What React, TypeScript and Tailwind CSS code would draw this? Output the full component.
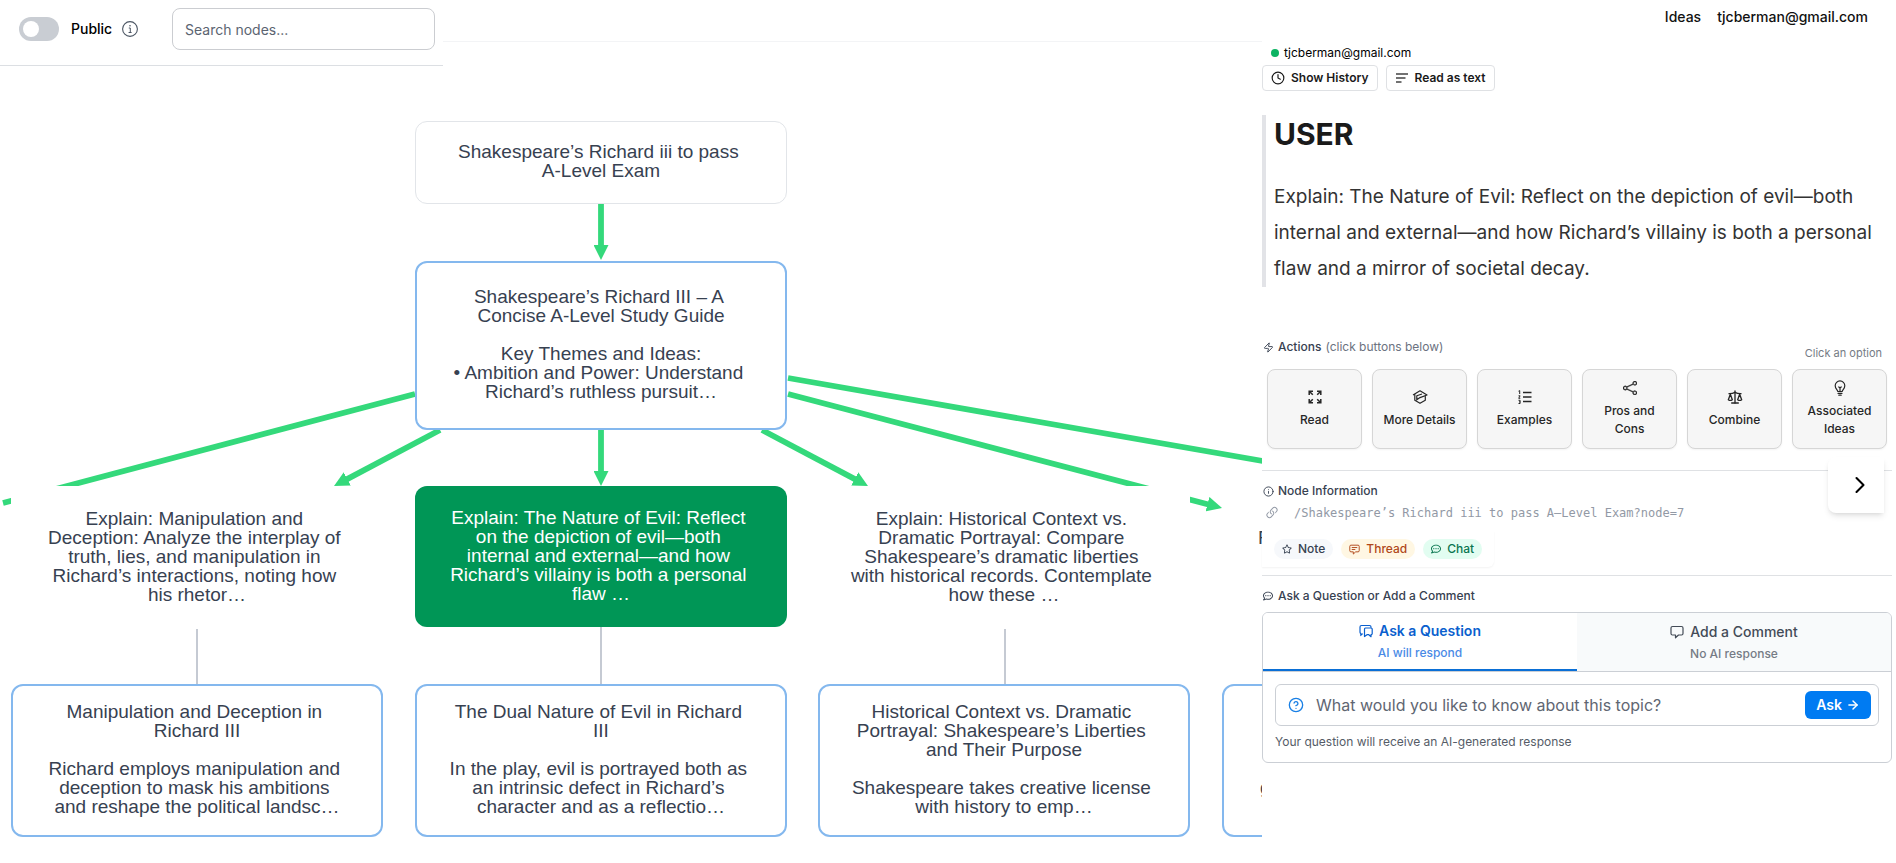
import { useState } from "react";
import type { ReactNode } from "react";
import clsx from "clsx";
import { BsLink45Deg, BsShare } from "react-icons/bs";
import { FaRegCommentDots, FaRegStar } from "react-icons/fa";
import { ArrowRight, ChevronRight, CircleQuestionMark, Clock, Info, Scale, Zap } from "lucide-react";

type GraphNode = {
  id: string;
  left: number;
  top: number;
  height: number;
  variant: "root" | "outline" | "plain" | "selected";
  align?: string;
  text: string;
};

// Wrapped lines keep their trailing space so they centre like the canvas labels
const nodes: GraphNode[] = [
  {
    id: "1",
    left: 415,
    top: 78,
    height: 83,
    variant: "root",
    text: "Shakespeare’s Richard iii to pass \nA-Level Exam",
  },
  {
    id: "2",
    left: 415,
    top: 218,
    height: 169,
    variant: "outline",
    text: "Shakespeare’s Richard III – A \nConcise A-Level Study Guide\n\nKey Themes and Ideas:\n• Ambition and Power: Understand \nRichard’s ruthless pursuit…",
  },
  {
    id: "5",
    left: 11,
    top: 443,
    height: 143,
    variant: "plain",
    text: "Explain: Manipulation and \nDeception: Analyze the interplay of \ntruth, lies, and manipulation in \nRichard’s interactions, noting how \nhis rhetor…",
  },
  {
    id: "7",
    left: 415,
    top: 443,
    height: 141,
    variant: "selected",
    text: "Explain: The Nature of Evil: Reflect \non the depiction of evil—both \ninternal and external—and how \nRichard’s villainy is both a personal \nflaw …",
  },
  {
    id: "9",
    left: 818,
    top: 443,
    height: 143,
    variant: "plain",
    text: "Explain: Historical Context vs. \nDramatic Portrayal: Compare \nShakespeare’s dramatic liberties \nwith historical records. Contemplate \nhow these …",
  },
  { id: "11", left: 1222, top: 443, height: 143, variant: "plain", align: "justify-start pl-9", text: "\nF\n\n\n " },
  {
    id: "6",
    left: 11,
    top: 641,
    height: 153,
    variant: "outline",
    text: "Manipulation and Deception in \nRichard III\n\nRichard employs manipulation and \ndeception to mask his ambitions \nand reshape the political landsc…",
  },
  {
    id: "8",
    left: 415,
    top: 641,
    height: 153,
    variant: "outline",
    text: "The Dual Nature of Evil in Richard \nIII\n\nIn the play, evil is portrayed both as \nan intrinsic defect in Richard’s \ncharacter and as a reflectio…",
  },
  {
    id: "10",
    left: 818,
    top: 641,
    height: 153,
    variant: "outline",
    text: "Historical Context vs. Dramatic \nPortrayal: Shakespeare’s Liberties \nand Their Purpose\n\nShakespeare takes creative license \nwith history to emp…",
  },
  { id: "12", left: 1222, top: 641, height: 153, variant: "outline", align: "justify-start pl-9", text: "\n\n\n\ng\n " },
];

const arrows = [
  { from: [601, 161], to: [601, 217] },
  { from: [601, 387], to: [601, 443] },
  { from: [440, 387], to: [334, 443] },
  { from: [762, 387], to: [868, 443] },
  { from: [788, 351], to: [1222, 465] },
];

const plainLines = [
  { from: [415, 351], to: [3, 460] },
  { from: [788, 335], to: [1280, 421] },
];

const childLinks = [197, 601, 1005];

function Graph() {
  return (
    <section aria-label="Idea graph" className="relative mt-px min-w-0 flex-1 overflow-hidden">
      <svg className="absolute left-0 top-0 h-full w-full" aria-hidden="true">
        <defs>
          <marker id="head" viewBox="0 0 15 15" refX="15" refY="7.5" markerWidth="15" markerHeight="15" markerUnits="userSpaceOnUse" orient="auto">
            <path d="M0 0L15 7.5L0 15z" fill="#34d97b" />
          </marker>
        </defs>
        {plainLines.map(({ from, to }) => (
          <line key={to[0]} x1={from[0]} y1={from[1]} x2={to[0]} y2={to[1]} stroke="#34d97b" strokeWidth="5.8" />
        ))}
        {arrows.map(({ from, to }) => {
          const length = Math.hypot(to[0] - from[0], to[1] - from[1]);
          const t = (length - 10) / length;
          const bx = from[0] + (to[0] - from[0]) * t;
          const by = from[1] + (to[1] - from[1]) * t;
          return (
            <g key={`${to[0]}-${to[1]}`}>
              <line x1={from[0]} y1={from[1]} x2={bx} y2={by} stroke="#34d97b" strokeWidth="5.8" />
              <line x1={from[0]} y1={from[1]} x2={to[0]} y2={to[1]} stroke="transparent" markerEnd="url(#head)" />
            </g>
          );
        })}
        {childLinks.map((x) => (
          <line key={x} x1={x} y1="584" x2={x} y2="642" stroke="#c5cad3" strokeWidth="2" />
        ))}
      </svg>
      {nodes.map((node) => (
        <div
          key={node.id}
          style={{ left: node.left, top: node.top, height: node.height }}
          className={clsx(
            "absolute flex w-[372px] items-center overflow-hidden whitespace-pre pb-[3px] text-center font-['Liberation_Sans',sans-serif] text-[19px] leading-[19px]",
            node.align ?? "justify-center",
            node.variant === "root" && "rounded-xl border border-[#e2e5e9] bg-white text-[#374151]",
            node.variant === "outline" && "rounded-xl border-2 border-[#84b8ee] bg-white text-[#374151]",
            node.variant === "plain" && "bg-white text-[#374151]",
            node.variant === "selected" && "rounded-xl bg-[#009656] text-white",
          )}
        >
          {node.text}
        </div>
      ))}
    </section>
  );
}

function ExpandIcon() {
  return (
    <svg width="16" height="16" viewBox="0 0 16 16" fill="none" stroke="currentColor" strokeWidth="1.5">
      <path d="M2.2 6V2.2H6M10 2.2h3.8V6M13.8 10v3.8H10M6 13.8H2.2V10M2.2 2.2l3.6 3.6M13.8 2.2l-3.6 3.6M13.8 13.8l-3.6-3.6M2.2 13.8l3.6-3.6" />
    </svg>
  );
}

function DetailsIcon() {
  return (
    <svg width="16" height="16" viewBox="0 0 16 16" fill="none" stroke="currentColor" strokeWidth="1.2" strokeLinejoin="round">
      <path d="M1 6l7-4.2L15 6l-7 2.6-3.2 2.2V6.8L10 5M2.8 5v6.300l5.200 3 5.300-3V6.500" />
    </svg>
  );
}

function NumberedListIcon() {
  return (
    <svg width="16" height="16" viewBox="0 0 16 16" fill="none" stroke="currentColor" strokeWidth="1.5">
      <path d="M6 3.500h8.500M6 8h8.500M6 12.500h8.500" />
      <path d="M1.500 2.200l1.200-.6V5M1.500 6.800h1.600L1.700 9.300h1.600M1.500 11.300h1.600v3.200H1.500M2 12.900h1.100" strokeWidth="1" />
    </svg>
  );
}

function BulbIcon() {
  return (
    <svg width="16" height="16" viewBox="0 0 16 16" fill="none" stroke="currentColor" strokeWidth="1.2" strokeLinecap="round" strokeLinejoin="round">
      <path d="M5.800 11.500c0-1.600-2.600-2.700-2.600-5.800a4.800 4.800 0 0 1 9.600 0c0 3.100-2.600 4.200-2.600 5.800z" />
      <path d="M8 11.500V8M6.800 7L8 8l1.200-1M6 13.300h4M6.800 15.200h2.400" />
    </svg>
  );
}

function InfoIcon() {
  return (
    <svg width="16" height="16" viewBox="0 0 16 16" fill="none" stroke="currentColor" strokeWidth="1.1">
      <circle cx="8" cy="8" r="7.400" />
      <path d="M6.800 7h1.500v4.500M6.600 11.500h3" strokeWidth="1" />
      <circle cx="8" cy="4.700" r=".8" fill="currentColor" stroke="none" />
    </svg>
  );
}

function CommentIcon({ size = 14, lines = false }: { size?: number; lines?: boolean }) {
  return (
    <svg width={size} height={size} viewBox="0 0 14 14" fill="none" stroke="currentColor" strokeWidth="1.2" strokeLinejoin="round">
      <path d="M2.500 1.500h9a1.500 1.500 0 0 1 1.500 1.500v5.500a1.500 1.500 0 0 1-1.500 1.500H8.500L5.500 12.800V10h-3A1.500 1.500 0 0 1 1 8.500V3a1.500 1.500 0 0 1 1.500-1.500z" />
      {lines && <path d="M3.500 4.500h7M3.500 7h4.500" />}
    </svg>
  );
}

function QuestionChatIcon() {
  return (
    <svg width="14" height="14" viewBox="0 0 14 14" fill="none" stroke="currentColor" strokeWidth="1.2" strokeLinejoin="round">
      <path d="M4 10H2.800L1.800 11.500V9.500A1.500 1.500 0 0 1 1 8V3a1.500 1.500 0 0 1 1.500-1.500h8A1.500 1.500 0 0 1 12 3v.8" />
      <path d="M6.500 4H12a1.200 1.200 0 0 1 1.200 1.200V9.500a1.200 1.200 0 0 1-1.200 1.200v2L9.800 10.700H8L5.500 12.500V5.200A1.200 1.200 0 0 1 6.500 4z" />
    </svg>
  );
}

const actions: { label: string; icon: ReactNode }[] = [
  { label: "Read", icon: <ExpandIcon /> },
  { label: "More Details", icon: <DetailsIcon /> },
  { label: "Examples", icon: <NumberedListIcon /> },
  { label: "Pros and Cons", icon: <BsShare size={14} strokeWidth={0.4} /> },
  { label: "Combine", icon: <Scale size={16} strokeWidth={2} /> },
  { label: "Associated Ideas", icon: <BulbIcon /> },
];

function SectionTitle({ icon, children }: { icon: ReactNode; children: ReactNode }) {
  return (
    <h2 className="flex items-center gap-1 text-xs leading-4 font-medium text-[#374151]">
      <span className="flex w-3 justify-center">{icon}</span>
      {children}
    </h2>
  );
}

function AskBox() {
  const [tab, setTab] = useState("ask");
  const [question, setQuestion] = useState("");

  return (
    <div className="mt-2 overflow-hidden rounded-md border border-[#cbcfd5]">
      <div role="tablist" className="grid h-[59px] grid-cols-2 border-b border-[#cbcfd5]">
        <button
          role="tab"
          aria-selected={tab === "ask"}
          onClick={() => setTab("ask")}
          className="flex flex-col items-center justify-center gap-1 border-b-2 border-[#0a6fd6] bg-white"
        >
          <span className="flex items-center gap-1.5 text-sm leading-5 font-semibold text-[#0a5fce]">
            <QuestionChatIcon />
            Ask a Question
          </span>
          <span className="text-xs leading-4 font-medium text-[#4a8ae6]">AI will respond</span>
        </button>
        <button
          role="tab"
          aria-selected={tab === "comment"}
          onClick={() => setTab("comment")}
          className="flex flex-col items-center justify-center gap-1 bg-[#f8fafb]"
        >
          <span className="flex items-center gap-1.5 text-sm leading-5 font-medium text-[#434b57]">
            <CommentIcon />
            Add a Comment
          </span>
          <span className="text-xs leading-4 font-medium text-[#757b85]">No AI response</span>
        </button>
      </div>
      <div className="p-3">
        <div className="flex h-[42px] items-center rounded-md border border-[#cbcfd5] pr-[7px] pl-3">
          <CircleQuestionMark size={16} className="shrink-0 text-[#1a80e5]" />
          <input
            type="text"
            aria-label="Your question"
            value={question}
            onChange={(e) => setQuestion(e.target.value)}
            placeholder="What would you like to know about this topic?"
            className="min-w-0 flex-1 px-3 text-base text-[#374151] outline-none placeholder:text-[#5f6672]"
          />
          <button className="flex h-7 items-center gap-1 rounded-md bg-[#007bf2] px-[11px] text-sm font-semibold text-white">
            Ask
            <ArrowRight size={14} strokeWidth={2.5} />
          </button>
        </div>
        <p className="mt-2 text-xs leading-4 text-[#555c67]">Your question will receive an AI-generated response</p>
      </div>
    </div>
  );
}

function DetailPanel() {
  return (
    <aside className="relative -mt-px w-[634px] shrink-0 bg-white pr-1">
      <div className="flex items-center gap-[5px] pt-1 pl-[9px] text-xs leading-4 text-black">
        <span className="size-2 rounded-full bg-[#0db463]" />
        tjcberman@gmail.com
      </div>
      <div className="mt-1 flex gap-2">
        <button className="flex h-[26px] items-center gap-1.5 rounded border border-[#dfe1e4] px-2 text-xs font-semibold text-[#1a1a1a]">
          <Clock size={14} strokeWidth={2} />
          Show History
        </button>
        <button className="flex h-[26px] items-center gap-1.5 rounded border border-[#dfe1e4] px-2 text-xs font-semibold text-[#1a1a1a]">
          <svg width="14" height="14" viewBox="0 0 14 14" stroke="#444" strokeWidth="1.5" aria-hidden="true">
            <path d="M1 3h12M1 7h9.500M1 11h5.500" />
          </svg>
          Read as text
        </button>
      </div>

      <article className="mt-6 border-l-4 border-[#e2e3e7] pl-2">
        <h1 className="mb-[26px] text-3xl leading-[38px] font-bold text-[#1a1a1a]">USER</h1>
        <p className="text-[19px] leading-9 text-[#333]">
          Explain: The Nature of Evil: Reflect on the depiction of evil—both internal and external—and how Richard’s
          villainy is both a personal flaw and a mirror of societal decay.
        </p>
      </article>

      <section className="mt-[52px]">
        <div className="flex items-start justify-between">
          <SectionTitle icon={<Zap size={11} />}>
            Actions <span className="font-normal text-[#6b7280]">(click buttons below)</span>
          </SectionTitle>
          <span className="mt-1.5 mr-2.5 text-[11px] leading-4 text-[#757b85]">Click an option</span>
        </div>
        <div className="mt-2 grid grid-cols-6 gap-2.5 px-[5px]">
          {actions.map(({ label, icon }) => (
            <button
              key={label}
              className="flex h-20 flex-col items-center justify-center gap-1.5 rounded-lg border border-[#d6d6d6] bg-[#f6f6f6] px-2 text-xs leading-[18px] font-medium text-[#262626] shadow-xs"
            >
              <span className="flex h-4 items-center">{icon}</span>
              {label}
            </button>
          ))}
        </div>
      </section>

      <section className="mt-[21px] border-t border-[#dfe1e4] pt-3">
        <SectionTitle icon={<Info size={11} />}>Node Information</SectionTitle>
        <div className="mt-1.5 flex items-center gap-3.5 pl-0.5 font-['DejaVu_Sans_Mono',monospace] text-xs leading-4 text-[#9299a5]">
          <BsLink45Deg size={16} />
          /Shakespeare’s Richard iii to pass A–Level Exam?node=7
        </div>
        <div className="mt-2.5 flex w-fit gap-2 rounded-br-md px-3 py-2 text-xs leading-5 font-medium shadow-xs">
          <button className="flex items-center gap-1.5 rounded-full bg-[#f6f8fb] px-2 text-[#374151]">
            <FaRegStar size={10} />
            Note
          </button>
          <button className="flex items-center gap-1.5 rounded-full bg-[#fff7e3] px-2 text-[#b0481a]">
            <CommentIcon size={11} lines />
            Thread
          </button>
          <button className="flex items-center gap-1.5 rounded-full bg-[#e2fdf1] px-2 text-[#0a7650]">
            <FaRegCommentDots size={10} />
            Chat
          </button>
        </div>
      </section>

      <section className="mt-2 border-t border-[#dfe1e4] pt-3">
        <SectionTitle icon={<FaRegCommentDots size={10} />}>Ask a Question or Add a Comment</SectionTitle>
        <AskBox />
      </section>

      <button
        aria-label="Next"
        className="absolute top-[416px] right-3 flex size-14 items-center justify-center rounded-l-lg bg-white pl-2 text-black shadow-md"
      >
        <ChevronRight size={28} strokeWidth={1.8} />
      </button>
    </aside>
  );
}

function Toolbar() {
  const [isPublic, setIsPublic] = useState(false);
  const [query, setQuery] = useState("");

  return (
    <div className="absolute top-0 left-0 z-10 flex h-[66px] w-[443px] items-start border-b border-[#dcdfe3] bg-white pt-2 pl-[19px]">
      <label className="flex h-[42px] items-center gap-3 text-sm font-medium text-black">
        <input
          type="checkbox"
          role="switch"
          checked={isPublic}
          onChange={(e) => setIsPublic(e.target.checked)}
          className="h-6 w-10 appearance-none rounded-full bg-[#c9cdd3] before:mt-1 before:ml-1 before:block before:size-4 before:rounded-full before:bg-white checked:bg-[#009656] checked:before:ml-5"
        />
        Public
      </label>
      <button aria-label="About visibility" className="ml-2.5 h-[42px] text-[#4b5563]">
        <InfoIcon />
      </button>
      <input
        type="search"
        aria-label="Search nodes"
        value={query}
        onChange={(e) => setQuery(e.target.value)}
        placeholder="Search nodes..."
        className="ml-auto mr-2 h-[42px] w-[263px] rounded-lg border border-[#cbcdd1] px-3 text-sm outline-none placeholder:text-[#5b6471]"
      />
    </div>
  );
}

export default function App() {
  return (
    <div className="relative flex min-h-screen flex-col bg-white font-['Inter',sans-serif]">
      <header className="h-[42px] border-b border-[#f3f4f6]">
        <nav className="flex justify-end gap-4 pt-[7px] pr-7 text-sm leading-5 font-medium text-[#111]">
          <a href="#ideas">Ideas</a>
          <a href="#account">tjcberman@gmail.com</a>
        </nav>
      </header>
      <Toolbar />
      <main className="flex flex-1">
        <Graph />
        <DetailPanel />
      </main>
    </div>
  );
}
